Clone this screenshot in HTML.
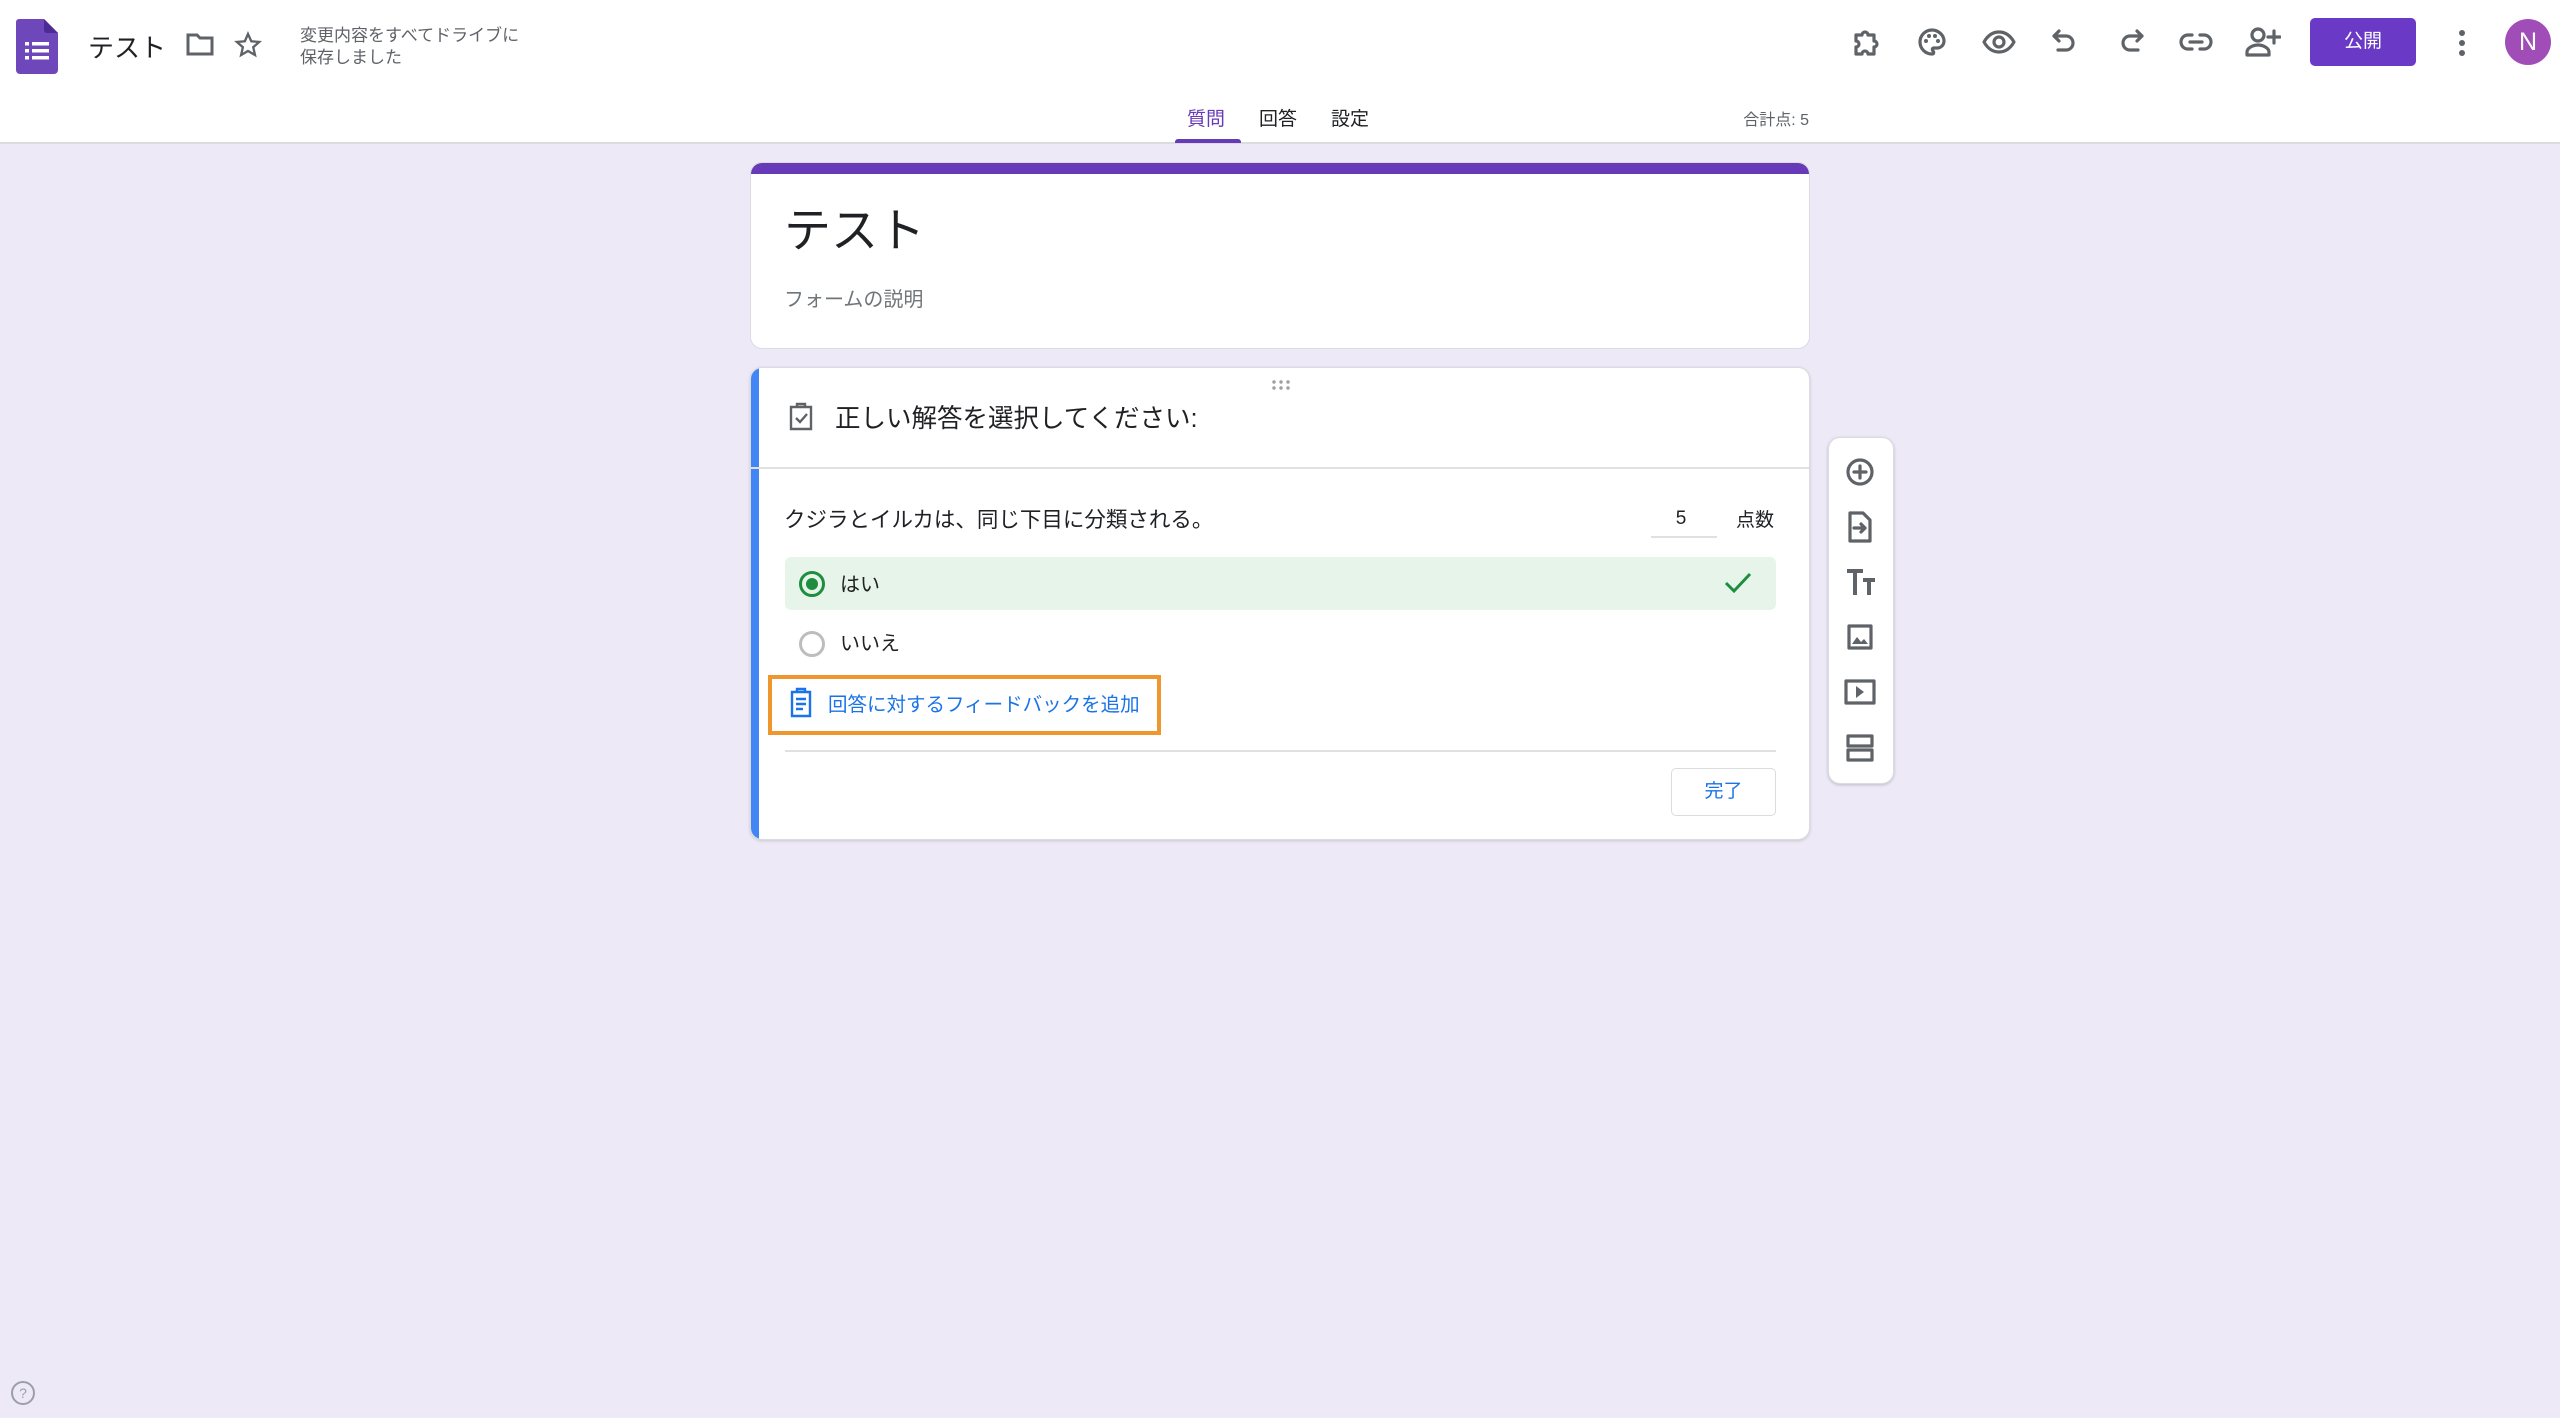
<!DOCTYPE html>
<html><head><meta charset="utf-8"><style>
*{box-sizing:border-box;margin:0;padding:0}
body{width:2560px;height:1418px;background:#ede9f6;font-family:"Liberation Sans","Noto Sans CJK JP",sans-serif;position:relative;overflow:hidden;color:#202124}
.abs{position:absolute}
.hdr{left:0;top:0;width:2560px;height:144px;background:#fff;border-bottom:2px solid #dadce0}
svg{display:block}
.ic{stroke:#5f6368;fill:none;stroke-width:3.2;stroke-linecap:round;stroke-linejoin:round}
.card{background:#fff;border-radius:12px;border:1px solid #dadce0}
</style></head><body>
<div class="abs hdr"></div>
<svg class="abs" style="left:16px;top:19px" width="42" height="55" viewBox="0 0 42 55"><path d="M3 0H28L42 14V51a4 4 0 0 1-4 4H4a4 4 0 0 1-4-4V3a3 3 0 0 1 3-3z" fill="#6e48bb"/><path d="M28 0L42 14H31a3 3 0 0 1-3-3z" fill="#4c2c94"/><g fill="#fff"><rect x="9" y="23" width="4" height="3.5"/><rect x="16" y="23" width="17" height="3.5"/><rect x="9" y="30" width="4" height="3.5"/><rect x="16" y="30" width="17" height="3.5"/><rect x="9" y="37" width="4" height="3.5"/><rect x="16" y="37" width="17" height="3.5"/></g></svg>
<div class="abs" style="left:88px;top:28px;font-size:26px;color:#202124">テスト</div>
<svg class="abs" style="left:186px;top:32px" width="28" height="24" viewBox="0 0 28 24"><path d="M2 3h9l3 3h12v16H2z" fill="none" stroke="#5f6368" stroke-width="3"/></svg>
<svg class="abs" style="left:234px;top:31px" width="28" height="28" viewBox="0 0 24 24"><path d="M12 2.5l2.8 6.3 6.8.6-5.1 4.5 1.5 6.7L12 17.1l-5.9 3.5 1.5-6.7L2.5 9.4l6.8-.6z" fill="none" stroke="#5f6368" stroke-width="2"/></svg>
<div class="abs" style="left:300px;top:25px;font-size:17px;line-height:22px;color:#5f6368">変更内容をすべてドライブに<br>保存しました</div>
<svg class="abs" style="left:1851px;top:27px" width="30" height="30" viewBox="0 0 30 30"><path class="ic" d="M5 8h6a3 3 0 0 1 6 0h6v6a3 3 0 0 1 0 6v7h-6a3 3 0 0 0-6 0H5v-7a3 3 0 0 0 0-6z"/></svg>
<svg class="abs" style="left:1917px;top:27px" width="30" height="30" viewBox="0 0 30 30"><path class="ic" d="M15 3a12 12 0 0 0 0 24c2 0 2-2 1-3s-1-3 1-3h3a7 7 0 0 0 7-7C27 8 21 3 15 3z"/><g fill="#5f6368"><circle cx="9" cy="14" r="2"/><circle cx="12" cy="9" r="2"/><circle cx="18" cy="9" r="2"/><circle cx="21" cy="14" r="2"/></g></svg>
<svg class="abs" style="left:1982px;top:27px" width="34" height="30" viewBox="0 0 34 30"><path class="ic" d="M2 15C6 8 11 5 17 5s11 3 15 10c-4 7-9 10-15 10S6 22 2 15z"/><circle class="ic" cx="17" cy="15" r="5"/></svg>
<svg class="abs" style="left:2050px;top:27px" width="30" height="30" viewBox="0 0 30 30"><path class="ic" d="M9 4L4 9l5 5M4 9h12a7 7 0 0 1 0 14h-8"/></svg>
<svg class="abs" style="left:2116px;top:27px" width="30" height="30" viewBox="0 0 30 30"><path class="ic" d="M21 4l5 5-5 5M26 9H14a7 7 0 0 0 0 14h8"/></svg>
<svg class="abs" style="left:2179px;top:27px" width="34" height="30" viewBox="0 0 34 30"><path class="ic" d="M13 8H9a7 7 0 0 0 0 14h4M21 8h4a7 7 0 0 1 0 14h-4M11 15h12"/></svg>
<svg class="abs" style="left:2245px;top:25px" width="36" height="34" viewBox="0 0 36 34"><circle class="ic" cx="13" cy="10" r="6"/><path class="ic" d="M2 30v-3c0-4 6-7 11-7s11 3 11 7v3zM29 6v12M23 12h12"/></svg>
<div class="abs" style="left:2310px;top:18px;width:106px;height:48px;background:#6a3ac7;border-radius:5px;color:#fff;font-size:19px;line-height:48px;text-align:center">公開</div>
<svg class="abs" style="left:2456px;top:28px" width="12" height="30" viewBox="0 0 12 30"><g fill="#5f6368"><circle cx="6" cy="5" r="3"/><circle cx="6" cy="15" r="3"/><circle cx="6" cy="25" r="3"/></g></svg>
<div class="abs" style="left:2505px;top:19px;width:46px;height:46px;border-radius:50%;background:#a04db8;color:#fff;font-size:25px;line-height:46px;text-align:center">N</div>
<div class="abs" style="left:1187px;top:104px;font-size:19px;color:#673ab7">質問</div>
<div class="abs" style="left:1259px;top:104px;font-size:19px;color:#202124">回答</div>
<div class="abs" style="left:1331px;top:104px;font-size:19px;color:#202124">設定</div>
<div class="abs" style="left:1175px;top:139px;width:66px;height:4px;background:#673ab7;border-radius:3px 3px 0 0"></div>
<div class="abs" style="left:1700px;top:106px;width:109px;text-align:right;font-size:16px;color:#5f6368">合計点: 5</div>
<div class="abs card" style="left:750px;top:162px;width:1060px;height:187px;overflow:hidden">
<div style="height:11px;background:#673ab7"></div>
<div class="abs" style="left:33px;top:29px;font-size:47px;color:#202124">テスト</div>
<div class="abs" style="left:33px;top:120px;font-size:20px;color:#70757a">フォームの説明</div>
</div>
<div class="abs card" style="left:750px;top:367px;width:1060px;height:473px;overflow:hidden;box-shadow:0 1px 3px rgba(0,0,0,.15)">
<div class="abs" style="left:0;top:0;width:8px;height:100%;background:#4285f4"></div>
<svg class="abs" style="left:520px;top:11px" width="20" height="12" viewBox="0 0 20 12"><g fill="#9aa0a6"><circle cx="3" cy="3" r="1.7"/><circle cx="10" cy="3" r="1.7"/><circle cx="17" cy="3" r="1.7"/><circle cx="3" cy="9" r="1.7"/><circle cx="10" cy="9" r="1.7"/><circle cx="17" cy="9" r="1.7"/></g></svg>
<svg class="abs" style="left:37px;top:34px" width="26" height="30" viewBox="0 0 26 30"><path d="M3 5h20v22H3z M9 5V2h8v3" fill="none" stroke="#5f6368" stroke-width="2.4"/><path d="M8 16l4 4 7-8" fill="none" stroke="#5f6368" stroke-width="2.4"/></svg>
<div class="abs" style="left:84px;top:30px;font-size:25.5px;color:#202124">正しい解答を選択してください:</div>
<div class="abs" style="left:0;top:99px;width:100%;height:2px;background:#e0e0e0"></div>
<div class="abs" style="left:33px;top:135px;font-size:21.5px;color:#202124">クジラとイルカは、同じ下目に分類される。</div>
<div class="abs" style="left:897px;top:140px;width:66px;text-align:center;font-size:19px">5</div>
<div class="abs" style="left:900px;top:168px;width:66px;height:2px;background:#e0e0e0"></div>
<div class="abs" style="left:985px;top:137px;font-size:19px">点数</div>
<div class="abs" style="left:34px;top:189px;width:991px;height:53px;background:#e6f4ea;border-radius:6px"></div>
<div class="abs" style="left:48px;top:203px;width:26px;height:26px;border-radius:50%;border:3px solid #1e8e3e"></div>
<div class="abs" style="left:55px;top:210px;width:12px;height:12px;border-radius:50%;background:#1e8e3e"></div>
<div class="abs" style="left:89px;top:200px;font-size:20px">はい</div>
<svg class="abs" style="left:972px;top:203px" width="30" height="24" viewBox="0 0 30 24"><path d="M3 12l8 8L27 3" fill="none" stroke="#1e8e3e" stroke-width="3"/></svg>
<div class="abs" style="left:48px;top:263px;width:26px;height:26px;border-radius:50%;border:3px solid #bdbdbd"></div>
<div class="abs" style="left:89px;top:259px;font-size:20px">いいえ</div>
<div class="abs" style="left:17px;top:307px;width:393px;height:60px;border:4px solid #f0962e"></div>
<svg class="abs" style="left:38px;top:319px" width="24" height="32" viewBox="0 0 24 32"><path d="M3 5h18v24H3z M8 5V2h8v3 M7 12h10M7 17h10M7 22h7" fill="none" stroke="#1a73e8" stroke-width="2.4"/></svg>
<div class="abs" style="left:77px;top:320px;font-size:19.5px;color:#1a73e8">回答に対するフィードバックを追加</div>
<div class="abs" style="left:34px;top:382px;width:991px;height:2px;background:#e0e0e0"></div>
<div class="abs" style="left:920px;top:400px;width:105px;height:48px;border:1px solid #dadce0;border-radius:5px;color:#1a73e8;font-size:19px;line-height:46px;text-align:center">完了</div>
</div>
<div class="abs card" style="left:1828px;top:437px;width:66px;height:347px;box-shadow:0 1px 3px rgba(0,0,0,.2)"></div>
<svg class="abs" style="left:1845px;top:457px" width="30" height="30" viewBox="0 0 30 30"><circle class="ic" cx="15" cy="15" r="12" stroke-width="2.6"/><path class="ic" d="M15 9v12M9 15h12" stroke-width="2.6"/></svg>
<svg class="abs" style="left:1847px;top:511px" width="26" height="32" viewBox="0 0 26 32"><path class="ic" stroke-width="2.6" d="M3 2h13l7 7v21H3z M7 17h11M14 13l4 4-4 4"/></svg>
<svg class="abs" style="left:1845px;top:569px" width="32" height="28" viewBox="0 0 32 28"><path d="M2 2h16M10 2v24M18 11h12M24 11v15" fill="none" stroke="#5f6368" stroke-width="4"/></svg>
<svg class="abs" style="left:1846px;top:623px" width="28" height="28" viewBox="0 0 28 28"><path class="ic" stroke-width="2.6" d="M3 3h22v22H3z"/><path d="M6 21l5-7 4 5 3-3 4 5z" fill="#5f6368"/></svg>
<svg class="abs" style="left:1844px;top:679px" width="32" height="26" viewBox="0 0 32 26"><path class="ic" stroke-width="2.6" d="M2 2h28v22H2z"/><path d="M12 7l8 6-8 6z" fill="#5f6368"/></svg>
<svg class="abs" style="left:1845px;top:733px" width="30" height="30" viewBox="0 0 30 30"><path class="ic" stroke-width="2.6" d="M3 3h24v10H3zM3 17h24v10H3z"/></svg>
<svg class="abs" style="left:10px;top:1380px" width="26" height="26" viewBox="0 0 26 26"><circle cx="13" cy="13" r="11" fill="none" stroke="#9aa0a6" stroke-width="2"/><text x="13" y="18" text-anchor="middle" font-size="14" fill="#9aa0a6" font-family="Liberation Sans">?</text></svg>
</body></html>
